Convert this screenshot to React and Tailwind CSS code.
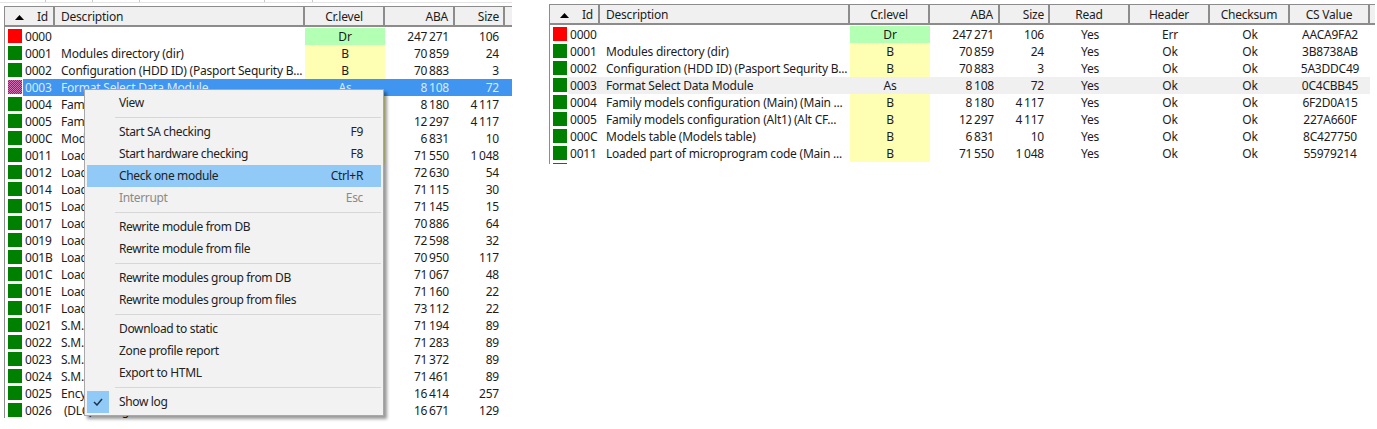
import React from "react";

const modules = [
  ["0000", "", "Dr", "247 271", "106", "Yes", "Err", "Ok", "AACA9FA2"],
  ["0001", "Modules directory (dir)", "B", "70 859", "24", "Yes", "Ok", "Ok", "3B8738AB"],
  ["0002", "Configuration (HDD ID) (Pasport Sequrity B...", "B", "70 883", "3", "Yes", "Ok", "Ok", "5A3DDC49"],
  ["0003", "Format Select Data Module", "As", "8 108", "72", "Yes", "Ok", "Ok", "0C4CBB45"],
  ["0004", "Family models configuration (Main) (Main ...", "B", "8 180", "4 117", "Yes", "Ok", "Ok", "6F2D0A15"],
  ["0005", "Family models configuration (Alt1) (Alt CF...", "B", "12 297", "4 117", "Yes", "Ok", "Ok", "227A660F"],
  ["000C", "Models table (Models table)", "B", "6 831", "10", "Yes", "Ok", "Ok", "8C427750"],
  ["0011", "Loaded part of microprogram code (Main ...", "B", "71 550", "1 048", "Yes", "Ok", "Ok", "55979214"],
];

const moreModules = [
  ["0012", "Load", "", "72 630", "54"],
  ["0014", "Load", "", "71 115", "30"],
  ["0015", "Load", "", "71 145", "15"],
  ["0017", "Load", "", "70 886", "64"],
  ["0019", "Load", "", "72 598", "32"],
  ["001B", "Load", "", "70 950", "117"],
  ["001C", "Load", "", "71 067", "48"],
  ["001E", "Load", "", "71 160", "22"],
  ["001F", "Load", "", "73 112", "22"],
  ["0021", "S.M.", "", "71 194", "89"],
  ["0022", "S.M.", "", "71 283", "89"],
  ["0023", "S.M.", "", "71 372", "89"],
  ["0024", "S.M.", "", "71 461", "89"],
  ["0025", "Ency", "", "16 414", "257"],
  ["0026", " (DLC) config", "", "16 671", "129"],
];

const levelColor = { Dr: "bg-[#b3ffb3]", B: "bg-[#ffffb3]" };

function HeaderCell({ className, children }) {
  return (
    <div className={`h-[18px] pt-[2px] flex items-center border-r-2 border-[#8c8c8c] bg-[#f0f0f0] ${className}`}>
      {children}
    </div>
  );
}

function TableHeader({ extended }) {
  return (
    <div className="flex h-[21px] items-start">
      <div className="flex w-full h-[20px] border-b-2 border-[#8c8c8c]">
        <HeaderCell className="w-[50px] justify-between pl-[10px] pr-[5px]">
          <svg width="9" height="5" viewBox="0 0 9 5"><path d="M4.5 0 9 5H0z" fill="#000" /></svg>
          <span>Id</span>
        </HeaderCell>
        <HeaderCell className="w-[250px] pl-[6px]">Description</HeaderCell>
        <HeaderCell className="w-[80px] justify-center">Cr.level</HeaderCell>
        <HeaderCell className="w-[70px] justify-end pr-[5px]">ABA</HeaderCell>
        <HeaderCell className="w-[50px] justify-end pr-[4px]">Size</HeaderCell>
        {extended && (
          <>
            <HeaderCell className="w-[80px] justify-center">Read</HeaderCell>
            <HeaderCell className="w-[80px] justify-center">Header</HeaderCell>
            <HeaderCell className="w-[80px] justify-center">Checksum</HeaderCell>
            <HeaderCell className="w-[80px] justify-center">CS Value</HeaderCell>
          </>
        )}
        <div className="flex-1 h-[18px] bg-[#f0f0f0]" />
      </div>
    </div>
  );
}

function Row({ id, desc, level, aba, size, extra, swatch, selected, soft }) {
  const swatchClass =
    swatch === "red"
      ? "bg-[#ff0000]"
      : swatch === "selected"
        ? "bg-[repeating-conic-gradient(#7b1fa2_0_25%,#d070b0_0_50%)] bg-[length:2px_2px]"
        : "bg-[#008000]";
  return (
    <div className="flex h-[17px] items-stretch">
      <div className="w-[18px] pl-[3px] pt-[1px] shrink-0">
        <div className={`w-[14px] h-[14px] ${swatchClass}`} />
      </div>
      <div className={`flex flex-1 ${selected ? "bg-[#3f95f0] text-[#dceaf8]" : soft ? "bg-[#f0f0f0]" : ""}`}>
        <div className="w-[32px] pl-[2px] flex items-center">{id}</div>
        <div className="w-[250px] pl-[6px] flex items-center whitespace-pre">{desc}</div>
        <div className={`w-[80px] flex items-center justify-center ${levelColor[level] || ""}`}>{level}</div>
        <div className="w-[70px] flex items-center justify-end pr-[6px] whitespace-pre [word-spacing:-1px]">{aba}</div>
        <div className="w-[50px] flex items-center justify-end pr-[6px] whitespace-pre [word-spacing:-1px]">{size}</div>
        {extra &&
          extra.map((v, i) => (
            <div key={i} className="w-[80px] flex items-center justify-center">{v}</div>
          ))}
      </div>
    </div>
  );
}

function Sep() {
  return <div className="h-px bg-[#d7d7d7] ml-[28px] my-[3px]" />;
}

function MenuItem({ label, keys, hover, disabled, checked }) {
  return (
    <div className={`flex h-[22px] items-center ${hover ? "bg-[#91c9f7]" : ""} ${disabled ? "text-[#8a8a8a]" : "text-[#222]"}`}>
      <div className="w-[32px] h-[22px]">
        {checked && (
          <div className="w-[22px] h-[22px] bg-[#91c9f7] flex items-center justify-center">
            <svg width="10" height="8" viewBox="0 0 10 8" fill="none"><path d="M1 4l3 3 5-6" stroke="#1a3550" strokeWidth="1.5" /></svg>
          </div>
        )}
      </div>
      <div className="flex-1">{label}</div>
      {keys && <div className="pr-[18px]">{keys}</div>}
    </div>
  );
}

function ContextMenu() {
  return (
    <div className="absolute left-[84px] top-[89px] w-[300px] h-[327px] bg-[#f2f2f2] border border-[#a8a8a8] p-[2px] shadow-[3px_3px_3px_rgba(0,0,0,0.4)] tracking-[-0.35px]">
      <MenuItem label="View" />
      <Sep />
      <MenuItem label="Start SA checking" keys="F9" />
      <MenuItem label="Start hardware checking" keys="F8" />
      <MenuItem label="Check one module" keys="Ctrl+R" hover />
      <MenuItem label="Interrupt" keys="Esc" disabled />
      <Sep />
      <MenuItem label="Rewrite module from DB" />
      <MenuItem label="Rewrite module from file" />
      <Sep />
      <MenuItem label="Rewrite modules group from DB" />
      <MenuItem label="Rewrite modules group from files" />
      <Sep />
      <MenuItem label="Download to static" />
      <MenuItem label="Zone profile report" />
      <MenuItem label="Export to HTML" />
      <Sep />
      <MenuItem label="Show log" checked />
    </div>
  );
}

export default function App() {
  return (
    <div className="relative w-[1377px] h-[429px] overflow-hidden bg-white text-[12px] leading-none tracking-[-0.22px] text-[#1c1c1c] font-['Noto_Sans',sans-serif]">
      {/* bits of the toolbar above the left table */}
      <div className="flex h-[3px] w-[512px] border-b border-[#e4e4e4]">
        <div className="w-[46px] border-r border-[#c8c8c8]" />
        <div className="w-[47px] border-r border-[#c8c8c8]" />
        <div className="w-[47px] border-r border-[#c8c8c8]" />
        <div className="w-[125px] border-r border-[#c8c8c8]" />
        <div className="w-[48px] border-r border-[#c8c8c8]" />
      </div>
      <div className="flex items-start">
        {/* left table with open menu */}
        <div className="w-[508px] ml-[4px] mt-[3px] h-[412px] border-l border-t border-[#8c8c8c] overflow-hidden shrink-0">
          <TableHeader />
          {modules.map((r) => (
            <Row
              key={r[0]}
              id={r[0]}
              desc={r[1]}
              level={r[2]}
              aba={r[3]}
              size={r[4]}
              swatch={r[0] === "0000" ? "red" : r[0] === "0003" ? "selected" : undefined}
              selected={r[0] === "0003"}
            />
          ))}
          {moreModules.map((r) => (
            <Row key={r[0]} id={r[0]} desc={r[1]} level={r[2]} aba={r[3]} size={r[4]} />
          ))}
        </div>
        {/* right table */}
        <div className="w-[826px] ml-[37px] mt-[1px] h-[160px] border-l border-t border-[#8c8c8c] overflow-hidden shrink-0">
          <TableHeader extended />
          <div className="w-[820px]">
            {modules.map((r) => (
              <Row
                key={r[0]}
                id={r[0]}
                desc={r[1]}
                level={r[2]}
                aba={r[3]}
                size={r[4]}
                extra={r.slice(5)}
                swatch={r[0] === "0000" ? "red" : undefined}
                soft={r[0] === "0003"}
              />
            ))}
            <Row id="" desc="" level="" aba="" size="" />
          </div>
        </div>
      </div>
      <ContextMenu />
    </div>
  );
}
